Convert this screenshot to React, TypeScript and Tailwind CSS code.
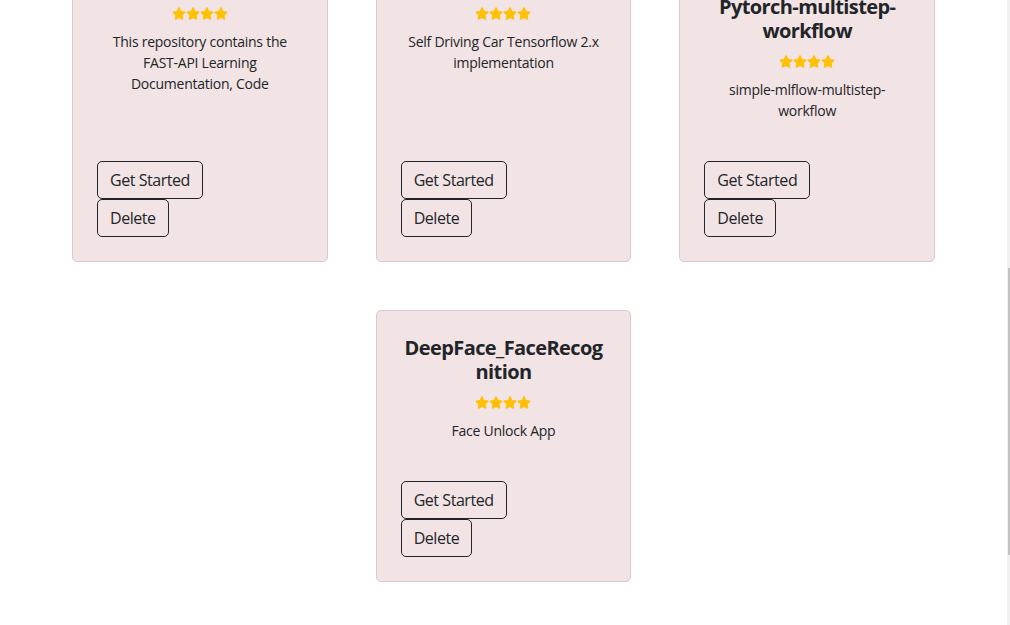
import React from "react";

const Star = () => (
  <svg width="14" height="13" viewBox="0 0 576 512" className="block">
    <path
      fill="#ffc107"
      d="M259.3 17.8L194 150.2 47.9 171.5c-26.2 3.8-36.7 36.1-17.7 54.6l105.7 103-25 145.5c-4.5 26.3 23.2 46 46.4 33.7L288 439.6l130.7 68.7c23.2 12.2 50.9-7.4 46.4-33.7l-25-145.5 105.7-103c19-18.5 8.5-50.8-17.7-54.6L382 150.2 316.7 17.8c-11.7-23.6-45.6-23.9-57.4 0z"
    />
  </svg>
);

type Card = { title: string[]; desc: string[] };

const cards: Card[] = [
  { title: [], desc: ["This repository contains the", "FAST-API Learning", "Documentation, Code"] },
  { title: [], desc: ["Self Driving Car Tensorflow 2.x", "implementation"] },
  { title: ["Pytorch-multistep-", "workflow"], desc: ["simple-mlflow-multistep-", "workflow"] },
  { title: ["DeepFace_FaceRecog", "nition"], desc: ["Face Unlock App"] },
];

function ProjectCard({ card, extra }: { card: Card; extra?: string }) {
  return (
    <div
      className={
        "flex flex-col rounded-[5px] border border-[#d5cbcb] bg-[#f2e3e4] px-6 pt-6 pb-6 text-center " +
        (extra ?? "")
      }
    >
      <h5 className="mt-[1px] mb-[7px] text-[20px] font-bold leading-[24px] tracking-[-0.6px] text-[#212529]">
        {card.title.map((t, i) => (
          <React.Fragment key={i}>
            {t}
            {i < card.title.length - 1 && <br />}
          </React.Fragment>
        ))}
      </h5>
      <div className="flex h-[22px] items-center justify-center">
        <Star />
        <Star />
        <Star />
        <Star />
      </div>
      <p className="mt-[7px] mb-[40px] text-[14px] leading-[21px] tracking-[-0.25px] text-[#212529]">
        {card.desc.map((t, i) => (
          <React.Fragment key={i}>
            {t}
            {i < card.desc.length - 1 && <br />}
          </React.Fragment>
        ))}
      </p>
      <div className="mt-auto flex flex-col items-start">
        <button className="h-[38px] rounded-[5px] border border-[#212529] px-3 text-[16px] leading-[24px] tracking-[-0.45px] text-[#212529]">
          Get Started
        </button>
        <button className="h-[38px] rounded-[5px] border border-[#212529] px-3 text-[16px] leading-[24px] tracking-[-0.45px] text-[#212529]">
          Delete
        </button>
      </div>
    </div>
  );
}

export default function App() {
  return (
    <div
      className="flex h-[625px] w-[1010px] overflow-hidden bg-white"
      style={{ fontFamily: '"Open Sans", "Noto Sans", sans-serif' }}
    >
      <main className="flex-1">
        <div className="mx-auto -mt-[31px] grid w-[863px] grid-cols-3 gap-12">
          <ProjectCard card={cards[0]} />
          <ProjectCard card={cards[1]} />
          <ProjectCard card={cards[2]} />
          <ProjectCard card={cards[3]} extra="col-start-2" />
        </div>
      </main>
      <div className="flex w-[3px] flex-col bg-[#f0f0f0] pt-[268px]">
        <div className="ml-[1px] h-[287px] w-[2px] bg-[#c2c2c2]" />
      </div>
    </div>
  );
}
